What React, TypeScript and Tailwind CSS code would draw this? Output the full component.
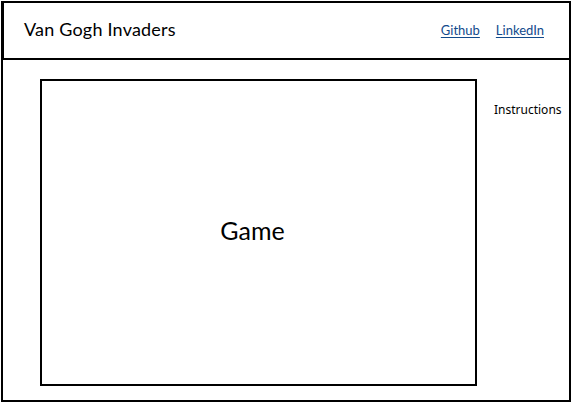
export default function App() {
  return (
    <div className="w-[573px] h-[404px] bg-white text-black pt-px pl-px" style={{ fontFamily: 'Lato, "Noto Sans", sans-serif' }}>
      {/* header */}
      <header className="w-[570px] h-[59px] border-2 border-l-[3px] border-black flex items-center justify-between pl-[20px] pr-[25px]">
        <h1 className="text-[18px] leading-none tracking-[0.2px] pb-[3px]">Van Gogh Invaders</h1>
        <nav className="flex items-center gap-4 text-[13px]">
          <a href="#" className="text-[#124a8c] underline underline-offset-2">Github</a>
          <a href="#" className="text-[#124a8c] underline underline-offset-2">LinkedIn</a>
        </nav>
      </header>

      {/* body */}
      <main className="w-[570px] h-[342px] border-2 border-t-0 border-black flex">
        <div className="ml-[37px] mt-[19px] w-[437px] h-[307px] border-2 border-black flex items-center justify-center pr-3 pb-1">
          <span className="text-[25px]">Game</span>
        </div>
        <aside className="ml-[17px] mt-[41px] text-[12px]" style={{ fontFamily: '"Noto Sans", sans-serif' }}>
          Instructions
        </aside>
      </main>
    </div>
  );
}
